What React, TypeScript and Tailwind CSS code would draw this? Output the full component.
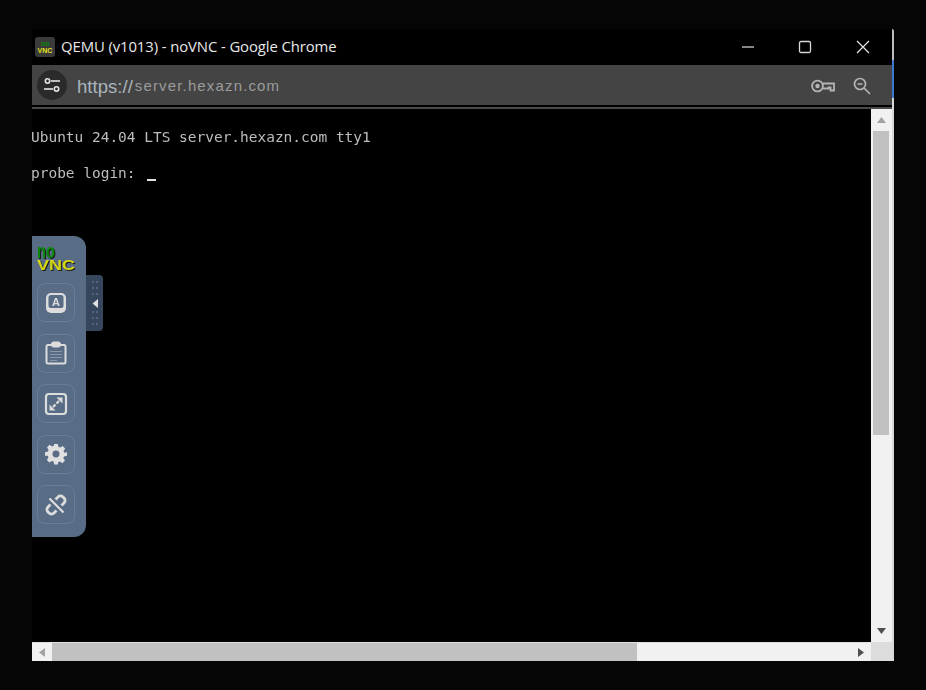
import React from "react";

function ToolBtn({ children }: { children: React.ReactNode }) {
  return (
    <div className="w-[38px] h-[39px] rounded-[8px] border border-[#6a7d96] flex items-center justify-center">
      {children}
    </div>
  );
}

export default function App() {
  return (
    <div className="w-[926px] h-[690px] bg-[#050505] pt-[29px] pl-[32px] overflow-hidden" style={{ fontFamily: '"Liberation Sans", sans-serif' }}>
      <div className="w-[862px] h-[632px] flex relative blur-[0.35px]">
        <div className="w-[860px] h-full flex flex-col bg-black">
          {/* Title bar */}
          <div className="h-[36px] shrink-0 bg-black flex items-center">
            <svg width="20" height="20" viewBox="0 0 20 20" className="ml-[3px] mr-[6px]">
              <rect width="20" height="20" rx="3" fill="#3a3a3a" />
              <text x="10" y="9" textAnchor="middle" fontSize="7" fontWeight="700" fontFamily="Liberation Sans" fill="#0a8a0a">no</text>
              <text x="10" y="16" textAnchor="middle" fontSize="7" fontWeight="700" fontFamily="Liberation Sans" fill="#e4e41a">VNC</text>
            </svg>
            <span className="text-[#e8e8e8] tracking-[-0.1px] mb-[2px]" style={{ fontFamily: '"Open Sans", sans-serif', fontSize: 14.88 }}>QEMU (v1013) - noVNC - Google Chrome</span>
            <div className="ml-auto flex items-center">
              <svg width="14" height="14" viewBox="0 0 14 14" className="mr-[43px]"><path d="M1 7h12" stroke="#d0d0d0" strokeWidth="1.3" /></svg>
              <svg width="14" height="14" viewBox="0 0 14 14" className="mr-[43px]"><rect x="1.5" y="1.5" width="11" height="11" rx="1.5" fill="none" stroke="#d8d8d8" strokeWidth="1.3" /></svg>
              <svg width="16" height="16" viewBox="0 0 16 16" className="mr-[21px]"><path d="M2 2l12 12M14 2L2 14" stroke="#e0e0e0" strokeWidth="1.3" /></svg>
            </div>
          </div>
          {/* Address bar */}
          <div className="h-[40px] shrink-0 bg-[#444444] flex items-center">
            <div className="ml-[5px] w-[30px] h-[30px] rounded-full bg-[#2a2a2a] flex items-center justify-center">
              <svg width="18" height="16" viewBox="0 0 18 16" fill="none" stroke="#e6e6e6" strokeWidth="1.6">
                <circle cx="4.5" cy="4" r="2.2" />
                <path d="M8 4h9" />
                <circle cx="13.5" cy="12" r="2.2" />
                <path d="M1 12h9" />
              </svg>
            </div>
            <span className="ml-[10px] mt-[3px] text-[#a9b4bd]" style={{ fontSize: 18.6 }}>https://</span>
            <span className="ml-[2px] mt-[3px] text-[15px] text-[#9b9b9b] tracking-[1.15px]">server.hexazn.com</span>
            <div className="ml-auto flex items-center mt-[2px]">
              <svg width="24" height="14" viewBox="0 0 24 14" fill="none" stroke="#b4b4b4" strokeWidth="1.8" className="mr-[18px]">
                <circle cx="6.5" cy="7" r="5.4" />
                <circle cx="6.5" cy="7" r="1.3" fill="#b4b4b4" />
                <path d="M12 4.5h11v7h-3.5V8.5h-2v1h-5.5" />
              </svg>
              <svg width="18" height="18" viewBox="0 0 18 18" fill="none" stroke="#b4b4b4" strokeWidth="1.7" className="mr-[21px]">
                <circle cx="7" cy="7" r="5.5" />
                <path d="M4.5 7h5M11 11l6 6" />
              </svg>
            </div>
          </div>
          <div className="h-[2px] shrink-0 bg-black" />
          <div className="h-[2px] shrink-0 bg-[#4a4a4a]" />
          {/* Main */}
          <div className="flex-1 flex min-h-0 bg-black">
            <div className="flex-1 flex flex-col min-w-0">
              <div className="flex-1 text-[#bdbdbd] leading-[18px] pt-[19px] whitespace-pre -ml-px" style={{ fontFamily: '"DejaVu Sans Mono", monospace', fontSize: 14.47 }}>
                <div>Ubuntu 24.04 LTS server.hexazn.com tty1</div>
                <div className="mt-[18px] flex items-end h-[18px]">probe login: <span className="inline-block w-[9px] h-[2px] mb-[1px] ml-[3px] bg-[#e0e0e0]" /></div>
              </div>
              {/* Horizontal scrollbar */}
              <div className="h-[19px] shrink-0 bg-[#f1f1f1] flex items-center border-t border-[#e0e0e0]">
                <div className="w-[20px] flex justify-center">
                  <svg width="6" height="9" viewBox="0 0 6 9"><path d="M6 0v9L0 4.5z" fill="#a3a3a3" /></svg>
                </div>
                <div className="w-[585px] h-full bg-[#c1c1c1]" />
                <div className="ml-auto w-[21px] flex justify-center">
                  <svg width="6" height="9" viewBox="0 0 6 9"><path d="M0 0v9l6-4.5z" fill="#505050" /></svg>
                </div>
              </div>
            </div>
            {/* Vertical scrollbar */}
            <div className="w-[21px] shrink-0 bg-[#f1f1f1] flex flex-col">
              <div className="h-[22px] flex items-center justify-center shrink-0">
                <svg width="9" height="6" viewBox="0 0 9 6"><path d="M0 6h9L4.5 0z" fill="#a3a3a3" /></svg>
              </div>
              <div className="h-[304px] ml-[2px] mr-[3px] bg-[#c1c1c1] shrink-0" />
              <div className="mt-auto h-[23px] flex items-center justify-center shrink-0">
                <svg width="9" height="6" viewBox="0 0 9 6"><path d="M0 0h9L4.5 6z" fill="#505050" /></svg>
              </div>
              <div className="h-[19px] bg-[#dcdcdc] shrink-0" />
            </div>
          </div>
        </div>

        {/* Window edge */}
        <div className="w-[2px] h-full flex flex-col rounded-tr-[4px] overflow-hidden">
          <div className="h-[31px] shrink-0 bg-[#bdbdbd]" />
          <div className="h-[38px] shrink-0 bg-[#3b78d0]" />
          <div className="flex-1 bg-[#d8d8d8]" />
        </div>

        {/* noVNC control bar */}
        <div className="absolute left-0 top-[207px] w-[54px] h-[301px] bg-[#586c86] rounded-r-[12px] flex flex-col items-start">
          <svg width="44" height="34" viewBox="0 0 44 34" className="ml-[3px] mt-[3px] drop-shadow-[1px_1px_0_#1c1c1c]">
            <text transform="translate(2,19) scale(1,1.45)" fontSize="14" fontWeight="700" fontFamily="Liberation Sans" fill="#0a8a0a" textLength="18" lengthAdjust="spacingAndGlyphs">no</text>
            <text x="2" y="31" fontSize="15" fontWeight="700" fontFamily="Liberation Sans" fill="#d8d810" textLength="38" lengthAdjust="spacingAndGlyphs">VNC</text>
          </svg>
          <div className="flex flex-col gap-[11.5px] ml-[5px] mt-[10px]">
            <ToolBtn>
              <svg width="22" height="22" viewBox="0 0 22 22">
                <rect x="1" y="1" width="20" height="20" rx="5" fill="#dcdcdc" />
                <rect x="3.5" y="3" width="15" height="13" rx="2.5" fill="#586c86" />
                <text x="11" y="14" textAnchor="middle" fontSize="11" fontWeight="700" fontFamily="Liberation Sans" fill="#dcdcdc">A</text>
              </svg>
            </ToolBtn>
            <ToolBtn>
              <svg width="22" height="24" viewBox="0 0 22 24" fill="none" stroke="#dcdcdc">
                <rect x="1.5" y="4" width="19" height="18.5" rx="1.5" strokeWidth="2" />
                <rect x="6.5" y="1" width="9" height="5" rx="2" fill="#dcdcdc" strokeWidth="1" />
                <path d="M5 10.5h12M5 13.5h12M5 16.5h12M5 19.5h7" strokeWidth="1" stroke="#8b98aa" />
              </svg>
            </ToolBtn>
            <ToolBtn>
              <svg width="24" height="24" viewBox="0 0 24 24" fill="none">
                <rect x="2" y="2" width="20" height="20" rx="3" stroke="#dcdcdc" strokeWidth="2.2" />
                <path d="M12.5 5.5h6v6zM11.5 18.5h-6v-6z" fill="#dcdcdc" />
                <path d="M15 9l-2.5 2.5M9 15l2.5-2.5" stroke="#dcdcdc" strokeWidth="2.4" />
              </svg>
            </ToolBtn>
            <ToolBtn>
              <svg width="22" height="22" viewBox="0 0 24 24" fill="#e0e0e0">
                <path fillRule="evenodd" d="M10 1h4l.6 3.2 1.9.8 2.7-1.8 2.8 2.8-1.8 2.7.8 1.9L24 10v4l-3.2.6-.8 1.9 1.8 2.7-2.8 2.8-2.7-1.8-1.9.8L14 23.5h-4l-.6-3.2-1.9-.8-2.7 1.8-2.8-2.8 1.8-2.7-.8-1.9L0 14v-4l3.2-.6.8-1.9L2.2 4.8 5 2l2.7 1.8 1.9-.8zM12 8.2a3.8 3.8 0 100 7.6 3.8 3.8 0 000-7.6z" />
              </svg>
            </ToolBtn>
            <ToolBtn>
              <svg width="24" height="24" viewBox="0 0 24 24" fill="none" stroke="#dcdcdc" strokeWidth="2.8">
                <path d="M11.5 6.5l2.5-2.5a3.5 3.5 0 015 0l1 1a3.5 3.5 0 010 5l-2.5 2.5" />
                <path d="M12.5 17.5l-2.5 2.5a3.5 3.5 0 01-5 0l-1-1a3.5 3.5 0 010-5l2.5-2.5" />
                <path d="M5.5 5.5l14 14" strokeWidth="2.2" />
              </svg>
            </ToolBtn>
          </div>
        </div>
        {/* handle */}
        <div className="absolute left-[54px] top-[246px] w-[17px] h-[56px] bg-[#36465c] rounded-r-[4px] flex items-center justify-center">
          <svg width="8" height="46" viewBox="0 0 8 46">
            <path d="M2 2h0M6 2h0M2 8h0M6 8h0M2 14h0M6 14h0M2 32h0M6 32h0M2 38h0M6 38h0M2 44h0M6 44h0" stroke="#5f7088" strokeWidth="2" strokeLinecap="round" />
            <path d="M7 19v9L1.5 23.5z" fill="#e0e0e0" />
          </svg>
        </div>
      </div>
    </div>
  );
}
